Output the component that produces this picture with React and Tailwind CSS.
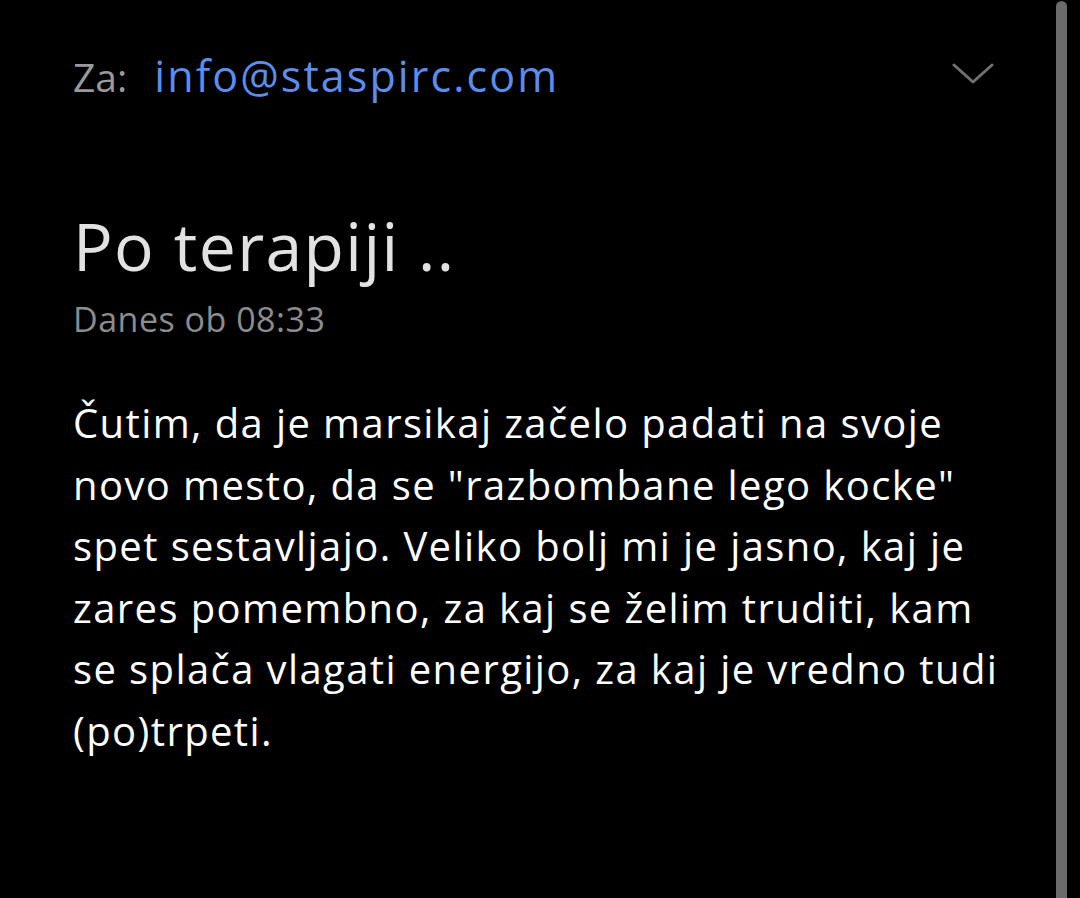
const bodyLines = [
  'Čutim, da je marsikaj začelo padati na svoje',
  'novo mesto, da se "razbombane lego kocke"',
  'spet sestavljajo. Veliko bolj mi je jasno, kaj je',
  'zares pomembno, za kaj se želim truditi, kam',
  'se splača vlagati energijo, za kaj je vredno tudi',
  '(po)trpeti.',
];

function Chevron() {
  return (
    <svg width="42" height="22" viewBox="0 0 42 22" fill="none" className="mt-[9px] shrink-0">
      <polyline points="2,2 21,19 40,2" stroke="#707070" strokeWidth="3" strokeLinecap="round" strokeLinejoin="round" />
    </svg>
  );
}

function App() {
  return (
    <div className="flex h-[898px] w-[1080px] overflow-hidden bg-black font-['Open_Sans',sans-serif]">
      <main className="min-w-0 flex-1 pl-[73px] pr-[62px]">
        <div className="flex items-start justify-between pt-[54px]">
          <div className="flex items-baseline gap-[27px]">
            <span className="text-[39px] leading-none text-[#9a9a9a]">Za:</span>
            <span className="text-[43px] leading-none tracking-[2.1px] text-[#5b8def]">info@staspirc.com</span>
          </div>
          <Chevron />
        </div>

        <h1 className="mt-[115px] text-[66px] leading-none tracking-[1.4px] text-[#e2e2e2]">Po terapiji ..</h1>
        <div className="mt-[24px] text-[34px] leading-none tracking-[0.5px] text-[#8c8c8c]">Danes ob 08:33</div>

        <div className="mt-[56px] text-[40px] leading-[61.5px] tracking-[1.4px] text-white">
          {bodyLines.map((line) => (
            <div key={line} className="whitespace-nowrap">{line}</div>
          ))}
        </div>
      </main>
      <div className="mr-[13px] mt-px h-full w-[11px] shrink-0 rounded-t-full bg-[#6b6b6b]" />
    </div>
  );
}

export default App;
